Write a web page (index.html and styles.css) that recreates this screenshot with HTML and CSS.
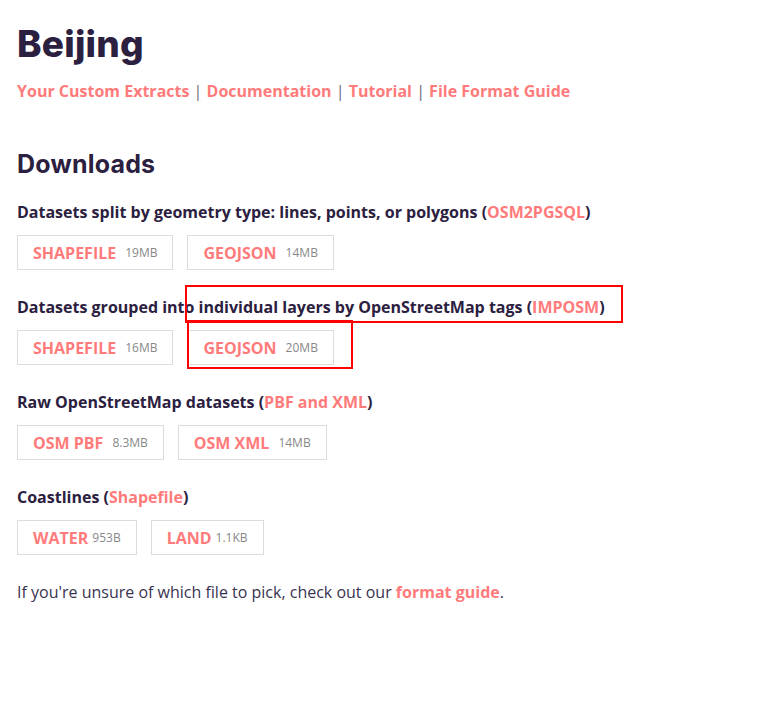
FILE: index.html
```html
<!DOCTYPE html>
<html lang="en">
<head>
  <meta charset="UTF-8">
  <meta name="viewport" content="width=device-width, initial-scale=1">
  <title>Beijing</title>
  <link rel="stylesheet" href="styles.css">
</head>
<body>

<div class="page">
  <h1>Beijing</h1>
  <div class="nav">
    <a href="#">Your Custom Extracts</a> | <a href="#">Documentation</a> | <a href="#">Tutorial</a> | <a href="#">File Format Guide</a>
  </div>

  <h2>Downloads</h2>

  <div class="group">
    <h4>Datasets split by geometry type: lines, points, or polygons (<a href="#">OSM2PGSQL</a>)</h4>
    <div class="buttons">
      <a class="btn" href="#">SHAPEFILE <span class="size">19MB</span></a>
      <a class="btn" href="#">GEOJSON <span class="size">14MB</span></a>
    </div>
  </div>

  <div class="group">
    <h4>Datasets grouped into individual layers by OpenStreetMap tags (<a href="#">IMPOSM</a>)</h4>
    <div class="buttons">
      <a class="btn" href="#">SHAPEFILE <span class="size">16MB</span></a>
      <a class="btn" href="#">GEOJSON <span class="size">20MB</span></a>
    </div>
  </div>

  <div class="group">
    <h4>Raw OpenStreetMap datasets (<a href="#">PBF and XML</a>)</h4>
    <div class="buttons">
      <a class="btn" href="#">OSM PBF <span class="size">8.3MB</span></a>
      <a class="btn" href="#">OSM XML <span class="size">14MB</span></a>
    </div>
  </div>

  <div class="group">
    <h4>Coastlines (<a href="#">Shapefile</a>)</h4>
    <div class="buttons">
      <a class="btn tight" href="#">WATER <span class="size">953B</span></a>
      <a class="btn tight" href="#">LAND <span class="size">1.1KB</span></a>
    </div>
  </div>

  <p class="note">If you're unsure of which file to pick, check out our <a href="#">format guide</a>.</p>
</div>

<!-- review marks -->
<div class="mark mark-title"></div>
<div class="mark mark-btn"></div>

</body>
</html>
```

FILE: styles.css
```css
body {
  margin: 0;
  background: #fff;
  font-family: "Open Sans", Arial, sans-serif;
  color: #2b2040;
}
.page {
  padding: 19px 17px 40px;
}
a {
  color: #ff7b7b;
  font-weight: 700;
  text-decoration: none;
}
h1 {
  font-family: Inter, "Noto Sans", sans-serif;
  font-size: 37px;
  font-weight: 800;
  letter-spacing: 0.2px;
  line-height: 50px;
  margin: 0 0 10px;
}
.nav {
  font-size: 16px;
  line-height: 24px;
  color: #6e6880;
}
h2 {
  font-family: Inter, "Noto Sans", sans-serif;
  font-size: 25px;
  font-weight: 700;
  letter-spacing: 0.2px;
  line-height: 32px;
  margin: 45px 0 21px;
}
.group {
  margin-bottom: 26px;
}
.group h4 {
  font-size: 16px;
  font-weight: 700;
  line-height: 22px;
  margin: 0 0 12px;
}
.buttons {
  display: flex;
  gap: 14px;
}
.btn {
  display: flex;
  align-items: center;
  height: 33px;
  padding: 0 15px;
  border: 1px solid #dcdcdc;
  font-size: 16px;
}
.size {
  margin-left: 9px;
  font-size: 12px;
  font-weight: 400;
  color: #888;
}
.tight .size {
  margin-left: 4px;
}
.note {
  margin: 0;
  font-size: 16px;
  line-height: 22px;
  color: #3a3350;
}
.mark {
  position: absolute;
  border: 2px solid #f00;
}
.mark-title {
  left: 185px;
  top: 285px;
  width: 434px;
  height: 34px;
}
.mark-btn {
  left: 187px;
  top: 320px;
  width: 162px;
  height: 45px;
}
```
